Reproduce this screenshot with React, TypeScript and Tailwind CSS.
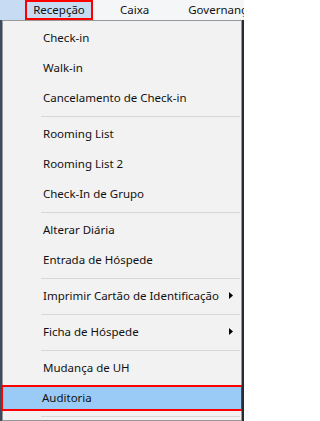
const ITEMS: ({ label: string; sub?: boolean; active?: boolean } | 'sep')[] = [
  { label: 'Check-in' },
  { label: 'Walk-in' },
  { label: 'Cancelamento de Check-in' },
  'sep',
  { label: 'Rooming List' },
  { label: 'Rooming List 2' },
  { label: 'Check-In de Grupo' },
  'sep',
  { label: 'Alterar Diária' },
  { label: 'Entrada de Hóspede' },
  'sep',
  { label: 'Imprimir Cartão de Identificação', sub: true },
  'sep',
  { label: 'Ficha de Hóspede', sub: true },
  'sep',
  { label: 'Mudança de UH' },
  { label: 'Auditoria', active: true },
  'sep',
]

function Arrow() {
  return (
    <svg width="4" height="7" viewBox="0 0 4 7" className="absolute left-[226px] top-[11px]">
      <path d="M0 0 L4 3.5 L0 7 Z" fill="#000" />
    </svg>
  )
}

export default function App() {
  return (
    <div
      className="flex h-[421px] w-[244px] flex-col overflow-hidden bg-[#2e3440] text-[11.5px] text-[#111]"
      style={{ fontFamily: '"Noto Sans", "Open Sans", sans-serif' }}
    >
      {/* menu bar */}
      <div className="flex h-[20px] shrink-0 items-stretch overflow-hidden bg-[#f5f6f7]">
        <div className="w-[25px] shrink-0 bg-[#c7dcf2]" />
        <div className="flex w-[68px] shrink-0 items-center justify-center border-[2.5px] border-[#ff0000] bg-[#c7dcf2] pb-px">
          Recepção
        </div>
        <div className="flex shrink-0 items-center pl-[27px] pb-px">Caixa</div>
        <div className="flex shrink-0 items-center whitespace-nowrap pl-[39px] pb-px">Governança</div>
      </div>

      <div className="flex min-h-0 flex-1">
        <div className="w-[2px] shrink-0 bg-[#3b4a5e]" />
        <div className="flex flex-1 flex-col border border-[#979797] bg-[#f2f2f2] pt-[2px]">
          {ITEMS.map((it, i) =>
            it === 'sep' ? (
              <div key={i} className="flex h-[6px] shrink-0 items-center pl-[38px] pr-px">
                <div className="h-px flex-1 bg-[#d7d7d7]" />
              </div>
            ) : it.active ? (
              <div key={i} className="-mx-[2px] flex h-[30px] shrink-0 items-center py-[2px]">
                <div className="flex h-full flex-1 items-center border-[2.5px] border-[#ff0000] bg-[#99cbf6] pl-[39px]">
                  {it.label}
                </div>
              </div>
            ) : (
              <div key={i} className="relative flex h-[30px] shrink-0 items-center whitespace-nowrap pl-[40px]">
                {it.label}
                {it.sub && <Arrow />}
              </div>
            ),
          )}
        </div>
        <div className="w-[2px] shrink-0 bg-[#252a33]" />
      </div>
    </div>
  )
}
